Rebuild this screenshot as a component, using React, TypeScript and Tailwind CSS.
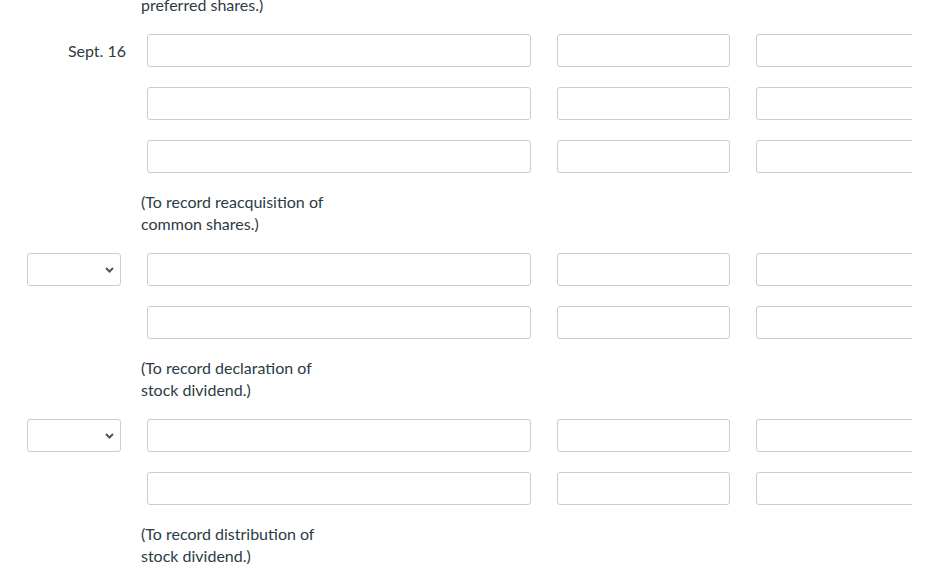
function Field({ w }: { w: string }) {
  return <div className={`${w} h-[33px] shrink-0 rounded-[3px] border border-[#c7cdd1] bg-white`} />
}

function Row({ label, select }: { label?: string; select?: boolean }) {
  return (
    <div className="flex items-center">
      <div className="w-[147px] shrink-0 flex items-center">
        {label && <span className="w-[126px] text-right text-[16px] text-[#2d3b45]">{label}</span>}
        {select && (
          <div className="ml-[27px] w-[94px] h-[33px] rounded-[3px] border border-[#c7cdd1] bg-white flex items-center justify-end pr-[6px]">
            <svg width="9" height="6" viewBox="0 0 9 6" fill="none">
              <path d="M1 1l3.5 3.5L8 1" stroke="#555" strokeWidth="2" />
            </svg>
          </div>
        )}
      </div>
      <Field w="w-[384px]" />
      <div className="w-[26px] shrink-0" />
      <Field w="w-[173px]" />
      <div className="w-[26px] shrink-0" />
      <Field w="w-[173px]" />
    </div>
  )
}

function Note({ lines, className = '' }: { lines: string[]; className?: string }) {
  return (
    <div className={`ml-[141px] text-[16px] leading-[22px] text-[#2d3b45] ${className}`}>
      {lines.map((l) => (
        <div key={l}>{l}</div>
      ))}
    </div>
  )
}

export default function App() {
  return (
    <div className="w-[912px] h-[577px] overflow-hidden bg-white" style={{ fontFamily: 'Lato, "Noto Sans", sans-serif' }}>
      <Note lines={['preferred shares.)']} className="mt-[-6px] mb-[18px]" />
      <div className="flex flex-col gap-[20px]">
        <Row label="Sept. 16" />
        <Row />
        <Row />
      </div>
      <Note lines={['(To record reacquisition of', 'common shares.)']} className="my-[18px]" />
      <div className="flex flex-col gap-[20px]">
        <Row select />
        <Row />
      </div>
      <Note lines={['(To record declaration of', 'stock dividend.)']} className="my-[18px]" />
      <div className="flex flex-col gap-[20px]">
        <Row select />
        <Row />
      </div>
      <Note lines={['(To record distribution of', 'stock dividend.)']} className="my-[18px]" />
    </div>
  )
}
